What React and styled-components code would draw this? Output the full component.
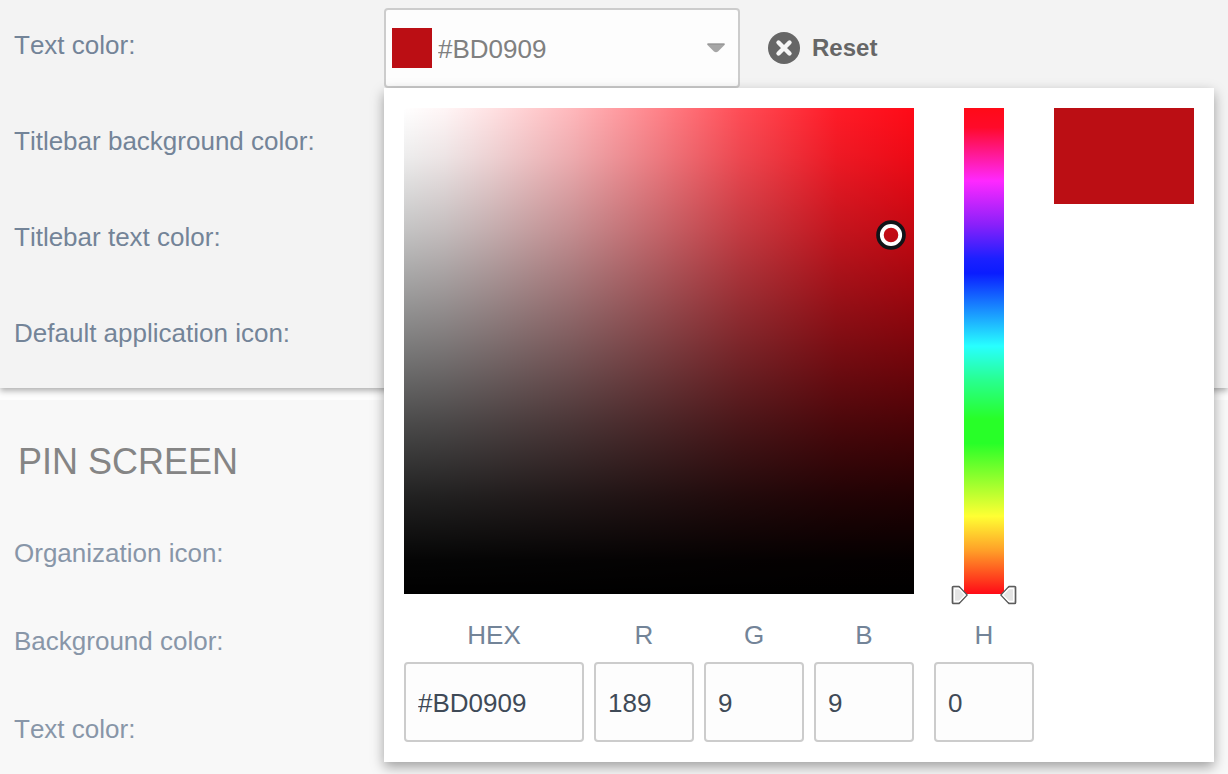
import React from "react";
import styled, { createGlobalStyle } from "styled-components";

const GlobalStyle = createGlobalStyle`
  *, *::before, *::after { box-sizing: border-box; }
  body {
    margin: 0;
    background: #f8f8f8;
    font-family: "Liberation Sans", Arial, Helvetica, sans-serif;
    font-size: 26px;
    line-height: 30px;
    font-kerning: none;
    color: #738498;
  }
  input, button { font: inherit; font-kerning: none; color: inherit; }
`;

const Page = styled.main`
  overflow: hidden;
`;

const AppSection = styled.section`
  position: relative;
  z-index: 1;
  padding-bottom: 4px;
  background: #f3f3f3;
  box-shadow: 0 3px 6px rgba(0, 0, 0, 0.3);
`;

const PinSection = styled.section`
  margin-top: 12px;
  padding-top: 40px;
  background: #f8f8f8;
  box-shadow: 0 -12px 0 #fdfdfd;
  color: #8896a8;
`;

const SectionTitle = styled.h2`
  margin: 0;
  padding: 0 18px 26px;
  font-size: 36px;
  line-height: 44px;
  font-weight: 400;
  color: #858585;
`;

const Row = styled.div`
  display: flex;
  align-items: center;
  height: ${({ $compact }) => ($compact ? "88px" : "96px")};
  padding-left: 14px;
`;

const RowLabel = styled.label`
  flex: 0 0 370px;
  padding-bottom: ${({ $compact }) => ($compact ? "2px" : "6px")};
`;

const PickerAnchor = styled.div`
  position: relative;
  flex: 0 0 356px;
  min-width: 0;
`;

const ColorField = styled.div`
  display: flex;
  align-items: center;
  height: 80px;
  padding-left: 6px;
  background: #fdfdfd;
  border: 2px solid #cccccc;
  border-radius: 4px;
`;

const FieldSwatch = styled.span`
  flex: 0 0 40px;
  height: 40px;
  background: #bb0e14;
`;

const FieldInput = styled.input`
  flex: 1;
  width: 0;
  min-width: 0;
  height: 76px;
  padding: 2px 6px 0;
  border: 0;
  outline: 0;
  background: transparent;
  color: #808080;
`;

const DropButton = styled.button`
  display: flex;
  align-items: center;
  justify-content: center;
  width: 44px;
  height: 76px;
  padding: 0;
  border: 0;
  background: transparent;
`;

const ResetButton = styled.button`
  display: flex;
  align-items: center;
  gap: 12px;
  margin-left: 28px;
  padding: 0;
  border: 0;
  background: transparent;
  color: #666666;
  font-size: 24px;
  font-weight: 700;
`;

const Popover = styled.div`
  position: absolute;
  top: 80px;
  left: 0;
  width: 830px;
  padding: 20px;
  background: #ffffff;
  box-shadow: 0 5px 12px rgba(0, 0, 0, 0.36);
`;

const PickerArea = styled.div`
  display: flex;
  align-items: flex-start;
`;

const SaturationMap = styled.div`
  position: relative;
  flex: 0 0 510px;
  height: 486px;
  background:
    linear-gradient(
      to bottom,
      rgba(0, 0, 0, 0) 0%,
      rgba(0, 0, 0, 0.07) 10%,
      rgba(0, 0, 0, 0.23) 25%,
      rgba(0, 0, 0, 0.53) 50%,
      rgba(0, 0, 0, 0.71) 65%,
      rgba(0, 0, 0, 0.87) 80%,
      rgba(0, 0, 0, 0.98) 93%,
      #000000 100%
    ),
    linear-gradient(
      to right,
      #ffffff 0%,
      rgba(255, 255, 255, 0.96) 8%,
      rgba(255, 255, 255, 0.88) 17%,
      rgba(255, 255, 255, 0.71) 33%,
      rgba(255, 255, 255, 0.49) 50%,
      rgba(255, 255, 255, 0.27) 66%,
      rgba(255, 255, 255, 0.07) 85%,
      rgba(255, 255, 255, 0) 100%
    ),
    #ff0a17;
`;

const MapCursor = styled.svg`
  position: absolute;
  top: 112px;
  left: 472px;
`;

const HueTrack = styled.div`
  position: relative;
  flex: 0 0 40px;
  height: 486px;
  margin: 0 50px;
  background: linear-gradient(
    to bottom,
    #ff0a17 0%,
    #ff0a2a 4%,
    #ff28ff 15%,
    #8a20fa 24%,
    #1c20ff 31%,
    #0a1cff 34%,
    #28ffff 49%,
    #28ff90 56%,
    #28ff28 64%,
    #28ff28 69%,
    #ffff33 84%,
    #ffa028 91%,
    #ff0a17 100%
  );
`;

const HueInput = styled.input`
  position: absolute;
  inset: 0;
  width: 40px;
  height: 486px;
  margin: 0;
  opacity: 0;
  writing-mode: vertical-lr;
  direction: rtl;
`;

const HueMarker = styled.svg`
  position: absolute;
  bottom: -12px;
  ${({ $side }) => $side}: -13px;
`;

const Preview = styled.div`
  flex: 1;
  height: 96px;
  background: #bb0e14;
`;

const Channels = styled.div`
  display: flex;
  gap: 10px;
  margin-top: 26px;
`;

const Channel = styled.label`
  display: flex;
  flex-direction: column;
  gap: 12px;
  width: ${({ $wide }) => ($wide ? "180px" : "100px")};
  margin-left: ${({ $apart }) => ($apart ? "10px" : "0")};
  text-align: center;
`;

const ChannelInput = styled.input`
  width: 100%;
  height: 80px;
  padding: 2px 12px 0;
  border: 2px solid #cccccc;
  border-radius: 4px;
  outline: 0;
  background: #fdfdfd;
  color: #3f4a57;
`;

const channels = [
  { name: "HEX", value: "#BD0909", wide: true },
  { name: "R", value: "189" },
  { name: "G", value: "9" },
  { name: "B", value: "9" },
  { name: "H", value: "0", apart: true },
];

function Marker({ side }) {
  const shape =
    side === "left"
      ? "M2.5 2.5 H8 L16 11 L8 19.5 H2.5 Q1.5 19.5 1.5 18.5 V3.5 Q1.5 2.5 2.5 2.5 Z"
      : "M15.5 2.5 H10 L2 11 L10 19.5 H15.5 Q16.5 19.5 16.5 18.5 V3.5 Q16.5 2.5 15.5 2.5 Z";
  return (
    <HueMarker $side={side} width="18" height="22" viewBox="0 0 18 22" aria-hidden="true">
      <path d={shape} fill="#e4e4e4" stroke="#5c5c5c" strokeWidth="1.7" strokeLinejoin="round" />
      <path d={shape} fill="none" stroke="#ffffff" strokeWidth="1.8"
        transform="translate(9 11) scale(.75) translate(-9 -11)" />
    </HueMarker>
  );
}

function ColorPopover() {
  return (
    <Popover>
      <PickerArea>
        <SaturationMap>
          <MapCursor width="30" height="30" viewBox="0 0 30 30" aria-hidden="true">
            <circle cx="15" cy="15" r="12.5" fill="none" stroke="#111418" strokeWidth="4.6" />
            <circle cx="15" cy="15" r="9.2" fill="none" stroke="#ffffff" strokeWidth="3.8" />
          </MapCursor>
        </SaturationMap>
        <HueTrack>
          <HueInput type="range" min="0" max="360" defaultValue="0" aria-label="Hue" />
          <Marker side="left" />
          <Marker side="right" />
        </HueTrack>
        <Preview />
      </PickerArea>
      <Channels>
        {channels.map(({ name, value, wide, apart }) => (
          <Channel key={name} $wide={wide} $apart={apart}>
            {name}
            <ChannelInput type="text" defaultValue={value} />
          </Channel>
        ))}
      </Channels>
    </Popover>
  );
}

export default function App() {
  return (
    <Page>
      <GlobalStyle />
      <AppSection>
        <Row>
          <RowLabel htmlFor="text-color">Text color:</RowLabel>
          <PickerAnchor>
            <ColorField>
              <FieldSwatch />
              <FieldInput id="text-color" type="text" defaultValue="#BD0909" />
              <DropButton type="button" aria-label="Choose color">
                <svg width="18" height="10" viewBox="0 0 18 10">
                  <path d="M0.5 0.5 H17.5 V2 L11 8.5 Q9 10 7 8.5 L0.5 2 Z" fill="#a6a6a6" />
                  <path d="M0.5 0.5 H17.5 V2 H0.5 Z" fill="#989898" />
                </svg>
              </DropButton>
            </ColorField>
            <ColorPopover />
          </PickerAnchor>
          <ResetButton type="button">
            <svg width="32" height="32" viewBox="0 0 32 32" aria-hidden="true">
              <circle cx="16" cy="16" r="16" fill="#666666" />
              <path d="M10.5 10.5 L21.5 21.5 M21.5 10.5 L10.5 21.5" stroke="#f6f6f6" strokeWidth="4.4" strokeLinecap="round" />
            </svg>
            Reset
          </ResetButton>
        </Row>
        <Row><RowLabel as="span">Titlebar background color:</RowLabel></Row>
        <Row><RowLabel as="span">Titlebar text color:</RowLabel></Row>
        <Row><RowLabel as="span">Default application icon:</RowLabel></Row>
      </AppSection>
      <PinSection>
        <SectionTitle>PIN SCREEN</SectionTitle>
        <Row $compact><RowLabel as="span" $compact>Organization icon:</RowLabel></Row>
        <Row $compact><RowLabel as="span" $compact>Background color:</RowLabel></Row>
        <Row $compact><RowLabel as="span" $compact>Text color:</RowLabel></Row>
      </PinSection>
    </Page>
  );
}
